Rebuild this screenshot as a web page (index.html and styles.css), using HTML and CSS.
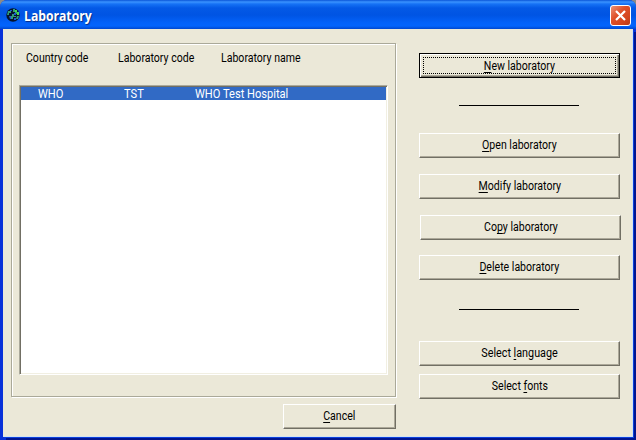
FILE: index.html
```html
<!DOCTYPE html>
<html lang="en">
<head>
<meta charset="utf-8">
<title>Laboratory</title>
<link rel="stylesheet" href="styles.css">
</head>
<body>
<div class="window">
  <header class="titlebar">
    <svg class="globe" width="14" height="14" viewBox="0 0 14 14">
      <circle cx="7" cy="7" r="6.7" fill="#06142c"/>
      <path d="M2 3h3v2H3v2H1zM7 1h2v2h2v3H9V4H7zM6 6h2v2h2v1H7v2H5V8h1zM11 8h2l-1 3h-2z" fill="#2f9a78"/>
      <path d="M4 2h2v1H4zM8 5h2v2H8zM3 8h2v3H4zM8 10h2v2H8z" fill="#1d57cf"/>
      <path d="M9 2h2v2H9zM11 4h2v3h-2z" fill="#45d84b"/>
    </svg>
    <h1 class="title">Laboratory</h1>
    <button class="close" aria-label="Close">
      <svg width="19" height="19" viewBox="0 0 19 19"><path d="M5 5l9 9M14 5l-9 9" stroke="#fff" stroke-width="2.2"/></svg>
    </button>
  </header>
  <main class="client">
    <section class="left">
      <div class="group">
        <div class="heads"><span class="t">Country code</span><span class="t">Laboratory code</span><span class="t">Laboratory name</span></div>
        <div class="list">
          <div class="row"><span class="t">WHO</span><span class="t">TST</span><span class="t">WHO Test Hospital</span></div>
        </div>
      </div>
      <button class="btn cancel"><span class="t"><u>C</u>ancel</span></button>
    </section>
    <aside class="actions">
      <button class="btn default"><span class="t"><u>N</u>ew laboratory</span></button>
      <hr class="rule">
      <button class="btn open"><span class="t"><u>O</u>pen laboratory</span></button>
      <button class="btn modify"><span class="t"><u>M</u>odify laboratory</span></button>
      <button class="btn copy"><span class="t">Co<u>p</u>y laboratory</span></button>
      <button class="btn delete"><span class="t"><u>D</u>elete laboratory</span></button>
      <hr class="rule">
      <button class="btn language"><span class="t">Select <u>l</u>anguage</span></button>
      <button class="btn fonts"><span class="t">Select <u>f</u>onts</span></button>
    </aside>
  </main>
</div>
</body>
</html>
```
FILE: styles.css
```css
* { box-sizing: border-box; }
body { margin: 0; background: #8d8b86; font: 12px/14px Roboto, sans-serif; color: #000; }
.window { width: 636px; height: 440px; border-radius: 7px 7px 0 0; overflow: hidden; background: #0831d9; display: flex; flex-direction: column; }
.titlebar { height: 29px; flex: none; display: flex; align-items: center; padding: 2px 5px 0 6px;
  background: linear-gradient(#0a55d8 0, #3a93ff 2px, #1672f5 4px, #0459e6 8px, #0054e3 15px, #0362fa 23px, #0364fc 26px, #0047cf 29px); }
.globe { margin-top: -2px; }
.title { margin: 0 auto 0 4px; font: bold 14px/16px "Open Sans", sans-serif; color: #fff; text-shadow: 1px 1px 1px #0a2b80; transform: scaleX(.87); transform-origin: 0 50%; }
.close { width: 21px; height: 21px; padding: 0; border: 1px solid #fff; border-radius: 3px; background: linear-gradient(135deg, #ec9277, #df5029 40%, #d3441c 75%, #b93a16); }
.close svg { display: block; }
.client { flex: 1; margin: 0 3px 3px; background: #ebe8d8; border-bottom: 1px solid #d5e3ef; border-right: 1px solid #d5e3ef; display: flex; box-shadow: 1px 1px 0 #0b40dc, 3px 3px 0 #001590; }
.left { margin: 14px 23px 0 8px; width: 385px; flex: none; display: flex; flex-direction: column; }
.group { height: 354px; border: 1px solid #aaa999; box-shadow: 1px 1px 0 #fff, inset 1px 1px 0 #fff; padding: 7px 7px 0; }
.heads { display: grid; grid-template-columns: 92px 103px 1fr; height: 34px; padding-left: 7px; }
.t { display: inline-block; white-space: nowrap; justify-self: start; transform: scaleX(.88); }
.heads .t { transform-origin: 0 50%; }
.list { height: 290px; border: 1px solid; border-color: #aaa99b #fff #fff #aaa99b; background: #fff; box-shadow: inset 1px 1px 0 #716f64, inset -1px -1px 0 #f1efe2; padding: 1px; }
.row { display: grid; grid-template-columns: 86px 71px 1fr; height: 13px; padding-left: 17px; background: #316ac5; color: #fff; }
.row .t { transform: scaleX(.925); transform-origin: 0 50%; }
.btn { display: flex; justify-content: center; align-items: center; width: 201px; height: 25px; flex: none; padding: 0 0 1px; font: inherit; color: inherit; border: 1px solid; border-color: #fff #716f64 #716f64 #fff; background: #ebe8d8; box-shadow: inset -1px -1px 0 #aca899; border-radius: 0; }
.cancel { width: 113px; margin: 7px 0 0 272px; }
.actions { padding-top: 24px; display: flex; flex-direction: column; }
.default { padding: 0; border-color: #000; position: relative; box-shadow: inset 1px 1px 0 #fff, inset -1px -1px 0 #716f64, inset -2px -2px 0 #aca899; }
.default::after { content: ""; position: absolute; inset: 3px; border: 1px dotted #000; }
.rule { width: 120px; height: 1px; margin: 27px 0 0 40px; border: 0; background: #000; flex: none; }
.open { margin-top: 27px; }
.modify { margin-top: 16px; }
.copy { margin: 16px 0 0 1px; }
.delete { margin: 15px 0 2px; }
.language { margin-top: 31px; }
.language .t { transform: scaleX(.9); }
.fonts { margin-top: 8px; }
u { text-underline-offset: 2px; text-decoration-thickness: 1px; text-decoration-skip-ink: none; }
```
